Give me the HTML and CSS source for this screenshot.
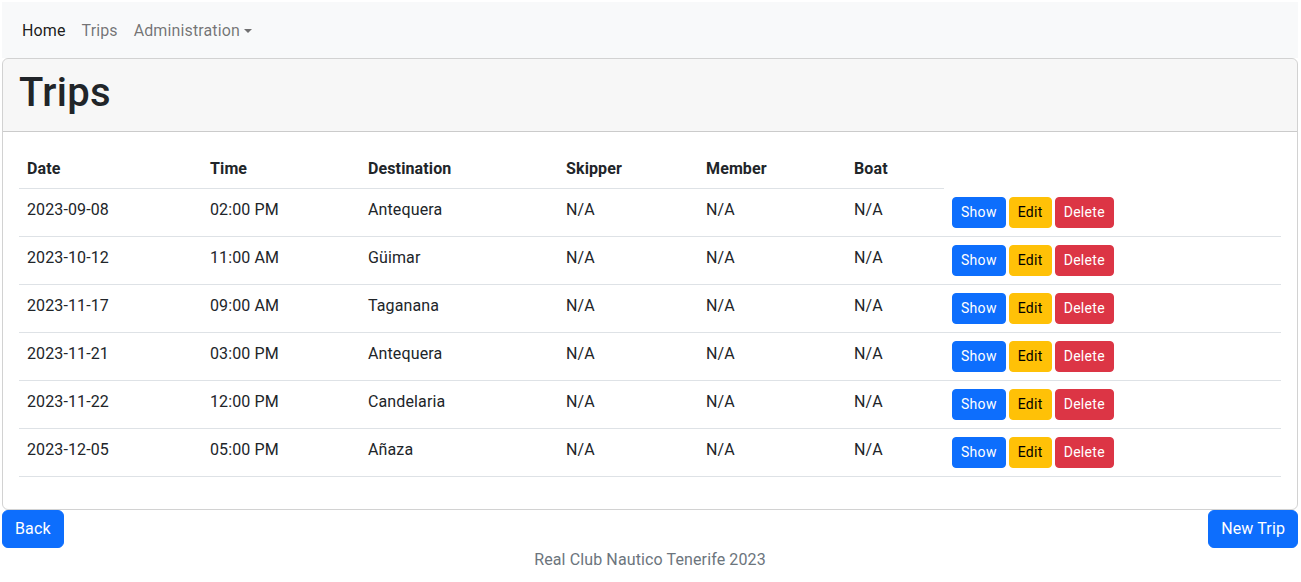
FILE: index.html
```html
<!DOCTYPE html>
<html lang="en">
<head>
<meta charset="utf-8">
<title>Trips</title>
<link rel="stylesheet" href="styles.css">
</head>
<body>
<div class="page">
  <nav class="navbar">
    <a class="nav-link active" href="#">Home</a>
    <a class="nav-link" href="#">Trips</a>
    <a class="nav-link dropdown" href="#">Administration<span class="caret"></span></a>
  </nav>
  <div class="card">
    <div class="card-header"><h1>Trips</h1></div>
    <div class="card-body">
      <table class="table">
        <colgroup>
          <col class="c-date"><col class="c-time"><col class="c-dest"><col class="c-skip"><col class="c-mem"><col class="c-boat"><col class="c-act">
        </colgroup>
        <thead>
          <tr><th>Date</th><th>Time</th><th>Destination</th><th>Skipper</th><th>Member</th><th>Boat</th></tr>
        </thead>
        <tbody>
          <tr><td>2023-09-08</td><td>02:00 PM</td><td>Antequera</td><td>N/A</td><td>N/A</td><td>N/A</td><td class="actions"><a class="btn btn-sm btn-primary" href="#">Show</a><a class="btn btn-sm btn-warning" href="#">Edit</a><a class="btn btn-sm btn-danger" href="#">Delete</a></td></tr>
          <tr><td>2023-10-12</td><td>11:00 AM</td><td>Güimar</td><td>N/A</td><td>N/A</td><td>N/A</td><td class="actions"><a class="btn btn-sm btn-primary" href="#">Show</a><a class="btn btn-sm btn-warning" href="#">Edit</a><a class="btn btn-sm btn-danger" href="#">Delete</a></td></tr>
          <tr><td>2023-11-17</td><td>09:00 AM</td><td>Taganana</td><td>N/A</td><td>N/A</td><td>N/A</td><td class="actions"><a class="btn btn-sm btn-primary" href="#">Show</a><a class="btn btn-sm btn-warning" href="#">Edit</a><a class="btn btn-sm btn-danger" href="#">Delete</a></td></tr>
          <tr><td>2023-11-21</td><td>03:00 PM</td><td>Antequera</td><td>N/A</td><td>N/A</td><td>N/A</td><td class="actions"><a class="btn btn-sm btn-primary" href="#">Show</a><a class="btn btn-sm btn-warning" href="#">Edit</a><a class="btn btn-sm btn-danger" href="#">Delete</a></td></tr>
          <tr><td>2023-11-22</td><td>12:00 PM</td><td>Candelaria</td><td>N/A</td><td>N/A</td><td>N/A</td><td class="actions"><a class="btn btn-sm btn-primary" href="#">Show</a><a class="btn btn-sm btn-warning" href="#">Edit</a><a class="btn btn-sm btn-danger" href="#">Delete</a></td></tr>
          <tr><td>2023-12-05</td><td>05:00 PM</td><td>Añaza</td><td>N/A</td><td>N/A</td><td>N/A</td><td class="actions"><a class="btn btn-sm btn-primary" href="#">Show</a><a class="btn btn-sm btn-warning" href="#">Edit</a><a class="btn btn-sm btn-danger" href="#">Delete</a></td></tr>
        </tbody>
      </table>
    </div>
  </div>
  <div class="bottom-bar">
    <a class="btn btn-primary" href="#">Back</a>
    <a class="btn btn-primary" href="#">New Trip</a>
  </div>
  <footer class="footer">Real Club Nautico Tenerife 2023</footer>
</div>
</body>
</html>
```
FILE: styles.css
```css
* { box-sizing: border-box; }
html, body { margin: 0; padding: 0; }
body {
  font-family: Roboto, "Noto Sans", "Liberation Sans", sans-serif;
  font-size: 16px;
  line-height: 1.5;
  letter-spacing: 0.12px;
  color: #212529;
  background: #fff;
}
.page { padding: 2px 3px 0 2px; }
a { text-decoration: none; }

.navbar {
  display: flex;
  align-items: center;
  background: #f8f9fa;
  padding: 8px 12px;
  height: 56px;
}
.nav-link {
  padding: 9px 8px 7px;
  color: rgba(0,0,0,.55);
  line-height: 24px;
}
.nav-link.active { color: rgba(0,0,0,.9); }
.caret {
  display: inline-block;
  margin-left: 4px;
  vertical-align: 3px;
  border-top: 4.8px solid;
  border-left: 4.8px solid transparent;
  border-right: 4.8px solid transparent;
}

.card {
  border: 1px solid rgba(0,0,0,.175);
  border-radius: 6px;
  overflow: hidden;
}
.card-header {
  background: rgba(0,0,0,.03);
  padding: 10px 16px 6px;
  border-bottom: 1px solid rgba(0,0,0,.175);
}
.card-header h1 {
  margin: 0 0 8px;
  font-size: 40px;
  font-weight: 500;
  line-height: 48px;
  letter-spacing: 0.3px;
}
.card-body { padding: 16px; }

.table {
  width: 100%;
  border-collapse: collapse;
  margin-bottom: 16px;
}
.c-date { width: 183px; }
.c-time { width: 158px; }
.c-dest { width: 198px; }
.c-skip { width: 140px; }
.c-mem { width: 148px; }
.c-boat { width: 98px; }
.table th, .table td {
  padding: 9px 8px 7px;
  text-align: left;
  vertical-align: top;
  border-bottom: 1px solid #dee2e6;
  line-height: 24px;
}
.table th { font-weight: 700; }
.table td.actions { white-space: nowrap; padding: 8px; }

.btn {
  display: inline-block;
  color: #fff;
  border: 1px solid transparent;
  border-radius: 6px;
  padding: 6px 12px;
  font-size: 16px;
  line-height: 24px;
}
.btn-sm {
  padding: 4px 8px;
  font-size: 14px;
  line-height: 21px;
  border-radius: 4px;
  margin-right: 3px;
  letter-spacing: 0.3px;
}
.btn-primary { background: #0d6efd; border-color: #0d6efd; }
.btn-warning { background: #ffc107; border-color: #ffc107; color: #000; }
.btn-danger { background: #dc3545; border-color: #dc3545; }

.bottom-bar {
  display: flex;
  justify-content: space-between;
}
.footer {
  text-align: center;
  color: #6c757d;
  line-height: 24px;
}
```
